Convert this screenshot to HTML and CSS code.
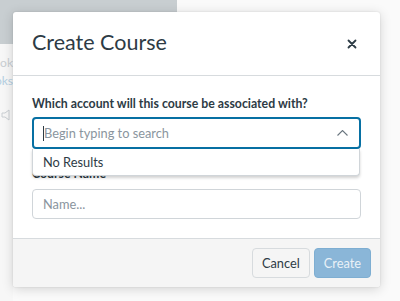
FILE: index.html
```html
<!DOCTYPE html>
<html lang="en">

<head>
    <meta charset="UTF-8">
    <meta name="viewport" content="width=device-width, initial-scale=1.0">
    <title>Create Course</title>
    <link rel="stylesheet" href="styles.css">
</head>

<body>
    <div class="app">
        <div class="app-top"></div>
        <div class="app-side">
            <span class="side-link">Gradebook</span>
            <span class="side-link side-link-blue">Books</span>
            <span class="side-icon">
                <svg width="10" height="12" viewBox="0 0 10 12">
                    <path d="M1 4h3l4-3v10L4 8H1z" fill="none" stroke="#c9ced2" stroke-width="1" />
                </svg>
            </span>
        </div>
    </div>

    <div class="modal">
        <div class="modal-header">
            <h2 class="modal-title">Create Course</h2>
            <button class="modal-close" aria-label="Close">
                <svg width="10" height="10" viewBox="0 0 10 10">
                    <path d="M1.5 1.5l7 7M8.5 1.5l-7 7" stroke="#2d3b45" stroke-width="1.8" stroke-linecap="round" />
                </svg>
            </button>
        </div>
        <div class="modal-body">
            <label class="field-label">Which account will this course be associated with?</label>
            <div class="select">
                <div class="select-input">
                    <span class="caret"></span>
                    <span class="placeholder">Begin typing to search</span>
                    <svg class="chevron" width="11" height="6" viewBox="0 0 11 6">
                        <path d="M0.5 5.5l5-5 5 5" fill="none" stroke="#6b7780" stroke-width="1.1" />
                    </svg>
                </div>
                <div class="select-menu">No Results</div>
            </div>
            <label class="field-label field-label-gap">Course Name</label>
            <div class="text-input">
                <span class="placeholder">Name...</span>
            </div>
        </div>
        <div class="modal-footer">
            <button class="btn">Cancel</button>
            <button class="btn btn-primary">Create</button>
        </div>
    </div>
</body>

</html>
```

FILE: styles.css
```css
*,
*::before,
*::after {
    box-sizing: border-box;
}

body {
    margin: 0;
    height: 301px;
    overflow: hidden;
    background-color: #fafafa;
    font-family: 'Lato', 'Noto Sans', sans-serif;
    color: #2d3b45;
}

/* background page behind the dialog */
.app {
    display: flex;
    flex-direction: column;
}

.app-top {
    width: 177px;
    height: 44px;
    background-color: #c8ced1;
}

.app-side {
    width: 13px;
    display: flex;
    flex-direction: column;
    align-items: flex-end;
    padding-top: 11px;
    gap: 3px;
    background-color: #f7f7f7;
    height: 257px;
}

.side-link {
    font-size: 12px;
    line-height: 15px;
    color: #c9ced2;
    white-space: nowrap;
}

.side-link-blue {
    color: #b4cfe2;
}

.side-icon {
    margin-top: 18px;
    display: flex;
    margin-right: 2px;
}

/* dialog */
.modal {
    position: absolute;
    left: 13px;
    top: 12px;
    width: 367px;
    background-color: #fff;
    border-radius: 3px;
    box-shadow: 0 2px 12px rgba(0, 0, 0, 0.16), 0 0 2px rgba(0, 0, 0, 0.12);
    overflow: hidden;
}

.modal-header {
    display: flex;
    align-items: center;
    justify-content: space-between;
    height: 64px;
    padding: 0 23px 0 19px;
    border-bottom: 1px solid #d7dbde;
}

.modal-title {
    margin: 0;
    font-size: 21.5px;
    font-weight: 400;
    line-height: 1;
    padding-bottom: 1px;
}

.modal-close {
    border: 0;
    background: none;
    padding: 0;
    display: flex;
}

.modal-body {
    padding: 20px 19px 19px;
}

.field-label {
    display: block;
    font-size: 12.3px;
    font-weight: 700;
    line-height: 15px;
    margin-bottom: 6px;
}

.field-label-gap {
    margin-top: 17px;
    margin-bottom: 8px;
}

.select {
    position: relative;
}

.select-input,
.text-input {
    display: flex;
    align-items: center;
    height: 32px;
    padding: 0 10px;
    border: 1px solid #d0d5d9;
    border-radius: 4px;
    font-size: 12.8px;
}

.select-input {
    border: 2px solid #0770a3;
    padding: 0 9px;
}

.text-input {
    height: 30px;
}

.placeholder {
    color: #8a959e;
}

.caret {
    width: 1px;
    height: 15px;
    background-color: #2d3b45;
}

.chevron {
    margin-left: auto;
    margin-right: 2px;
}

.select-menu {
    position: absolute;
    left: 0;
    right: 1px;
    top: 32px;
    height: 27px;
    display: flex;
    align-items: center;
    padding: 0 10px;
    font-size: 12.8px;
    background-color: #fff;
    border: 1px solid #d0d5d9;
    border-top: 0;
    border-radius: 0 0 4px 4px;
    box-shadow: 0 2px 3px rgba(0, 0, 0, 0.18);
}

.modal-footer {
    display: flex;
    justify-content: flex-end;
    gap: 4px;
    padding: 9px 9px 9px;
    background-color: #f5f5f5;
    border-top: 1px solid #d7dbde;
}

.btn {
    height: 30px;
    padding: 0 9px;
    font-family: 'Lato', 'Noto Sans', sans-serif;
    font-size: 12.8px;
    color: #2d3b45;
    background-color: #f5f5f5;
    border: 1px solid #d7dbde;
    border-radius: 4px;
}

.btn-primary {
    color: #e9f1f7;
    background-color: #8ab6d8;
    border-color: #7eaed2;
}
```
